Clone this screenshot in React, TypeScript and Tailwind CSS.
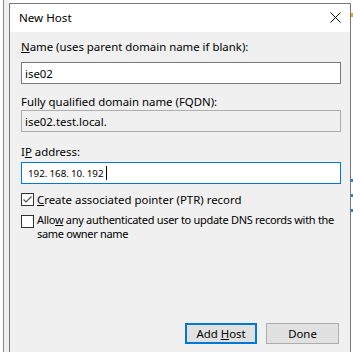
const Check = ({ checked }: { checked?: boolean }) => (
  <span className="w-[13px] h-[13px] shrink-0 border border-[#333333] bg-white flex items-center justify-center">
    {checked && (
      <svg width="11" height="11" viewBox="0 0 11 11">
        <polyline points="1.5,5.5 4,8 9.5,2.5" fill="none" stroke="#555555" strokeWidth="1.2" />
      </svg>
    )}
  </span>
);

const App = () => {
  return (
    <div className="w-[353px] h-[352px] bg-white flex overflow-hidden font-['Noto_Sans',sans-serif] text-[11.4px] leading-[15px] text-black">
      <div className="w-[3px]" />
      <div className="w-px bg-[#8c8c8c]" />
      <div className="w-[5px] bg-[#f0f0f0]" />

      <div className="mt-[3px] w-[342px] shrink-0 border-x border-t border-[#7a7a7a] bg-[#f0f0f0] flex flex-col">
        {/* title bar */}
        <div className="h-[28px] bg-white flex items-start justify-between pl-[9px] pr-[9px] pt-[6px]">
          <span className="text-[11.6px]">New Host</span>
          <svg width="11" height="11" viewBox="0 0 11 11" className="mt-[2px]">
            <path d="M0.5 0.5 L10.5 10.5 M10.5 0.5 L0.5 10.5" stroke="#000" strokeWidth="1" />
          </svg>
        </div>

        <div className="flex-1 flex flex-col pl-[11px] pr-[9px] pt-[7px] pb-[8px]">
          <span>
            <span className="underline">N</span>ame (uses parent domain name if blank):
          </span>
          <div className="mt-[8px] h-[22px] border border-[#7a7a7a] bg-white flex items-center pl-[3px]">ise02</div>

          <span className="mt-[10px]">Fully qualified domain name (FQDN):</span>
          <div className="mt-[1px] h-[22px] border border-[#adadad] bg-[#f0f0f0] flex items-center pl-[3px]">
            ise02.test.local.
          </div>

          <span className="mt-[12px]">
            I<span className="underline">P</span> address:
          </span>
          <div className="mt-[3px] h-[22px] border border-[#0078d7] bg-white flex items-center pl-[6px] gap-[2px] text-[9.8px]">
            <span>192.</span>
            <span>168.</span>
            <span>10.</span>
            <span className="flex items-center">
              192<span className="ml-[2px] w-px h-[14px] bg-black" />
            </span>
          </div>

          <div className="mt-[8px] flex items-center gap-[3px]">
            <Check checked />
            <span>
              <span className="underline">C</span>reate associated pointer (PTR) record
            </span>
          </div>

          <div className="mt-[6px] flex items-start gap-[3px]">
            <div className="pt-[2px]">
              <Check />
            </div>
            <div className="flex flex-col leading-[14px] text-[11px] tracking-[-0.3px] whitespace-nowrap">
              <span>
                Allo<span className="underline">w</span> any authenticated user to update DNS records with the
              </span>
              <span>same owner name</span>
            </div>
          </div>

          <div className="mt-auto flex justify-end gap-[9px] pr-[2px]">
            <button className="w-[72px] h-[21px] border-2 border-[#0078d7] bg-[#e1e1e1] flex items-center justify-center">
              <span>
                Add <span className="underline">H</span>ost
              </span>
            </button>
            <button className="w-[73px] h-[21px] border border-[#adadad] bg-[#e1e1e1] flex items-center justify-center">
              Done
            </button>
          </div>
        </div>
      </div>

      <div className="w-[2px] flex flex-col">
        <span className="mt-[13px] h-[4px] bg-[#e0a030]" />
        <span className="mt-[162px] h-[3px] bg-[#2f7fd0]" />
        <span className="mt-[12px] h-[3px] bg-[#2f7fd0]" />
        <span className="mt-[12px] h-[3px] bg-[#2f7fd0]" />
      </div>
    </div>
  );
};

export default App;
